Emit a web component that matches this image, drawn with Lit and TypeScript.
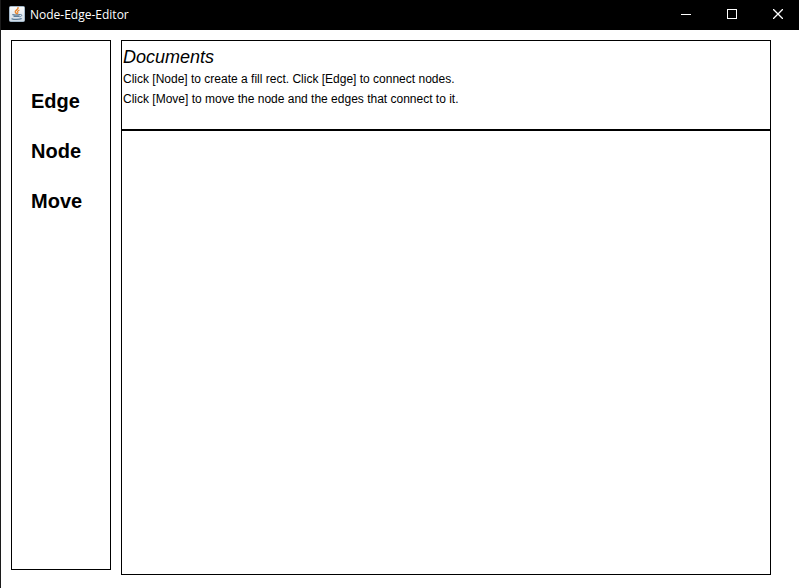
import { LitElement, html, css } from "lit";
import { customElement, state } from "lit/decorators.js";

const TOOLS = ["Edge", "Node", "Move"];

@customElement("app-title-bar")
export class AppTitleBar extends LitElement {
  static styles = css`
    :host {
      display: flex;
      align-items: center;
      height: 30px;
      background: #000;
      color: #fff;
    }
    .logo {
      flex: none;
      margin: 0 5px 2px 8px;
    }
    .title {
      flex: 1;
      margin: 0;
      font: 400 12px/28px "Noto Sans", "Open Sans", sans-serif;
      font-family: "Open Sans", "Noto Sans", sans-serif;
    }
    .controls {
      display: flex;
      gap: 4px;
      margin-bottom: 2px;
    }
    .control {
      display: grid;
      place-items: center;
      width: 42px;
      height: 28px;
      padding: 0;
      border: 0;
      background: none;
      color: inherit;
    }
    .glyph {
      display: block;
      fill: none;
      stroke: currentColor;
    }
  `;

  render() {
    return html`
      <svg class="logo" width="16" height="16" viewBox="0 0 16 16" aria-hidden="true">
        <defs>
          <linearGradient id="tile" x1="0" y1="0" x2="0" y2="1">
            <stop offset="0" stop-color="#fbfcfd" />
            <stop offset="1" stop-color="#cfdbe6" />
          </linearGradient>
        </defs>
        <rect x="0.5" y="0.5" width="15" height="15" rx="1" fill="url(#tile)" stroke="#a3b8ca" />
        <g fill="none" stroke-linecap="round">
          <path d="M9 1.6C9.8 3.4 6 4.2 6.3 5.9C6.5 6.8 7.4 7.1 7.5 7.8" stroke="#e8862d" stroke-width="1.5" />
          <path d="M10 4.2C8.6 5 8.2 5.6 8.8 6.4C9.1 6.9 8.8 7.4 8.4 7.8" stroke="#e8862d" stroke-width="1.2" />
          <path d="M3.8 8.6C5.2 9.2 9.4 9.2 10.6 8.6M5 10.5H10.2" stroke="#5f7f9b" stroke-width="1.2" />
          <path d="M11.2 8.5C13.6 8.1 13.2 10.4 11 10.8" stroke="#5f7f9b" />
          <path d="M3 12.8C5 13.6 10.4 13.6 12.2 12.6" stroke="#5f7f9b" stroke-width="1.3" />
        </g>
      </svg>
      <h1 class="title">Node-Edge-Editor</h1>
      <div class="controls">
        <button class="control" aria-label="Minimize">
          <svg class="glyph" width="10" height="10" viewBox="0 0 10 10"><path d="M0 5.5H10" /></svg>
        </button>
        <button class="control" aria-label="Maximize">
          <svg class="glyph" width="10" height="10" viewBox="0 0 10 10"><rect x="0.5" y="0.5" width="9" height="9" /></svg>
        </button>
        <button class="control" aria-label="Close">
          <svg class="glyph" width="10" height="10" viewBox="0 0 10 10"><path d="M0 0L10 10M10 0L0 10" stroke-width="1.3" /></svg>
        </button>
      </div>
    `;
  }
}

@customElement("app-root")
export class AppRoot extends LitElement {
  static styles = css`
    :host {
      display: flex;
      flex-direction: column;
      box-sizing: border-box;
      min-height: 100vh;
      border-left: 1px solid #1c1c1c;
      background: #fff;
      color: #000;
      font-family: "Liberation Sans", Arial, sans-serif;
    }
    .workspace {
      flex: 1;
      display: flex;
      gap: 10px;
      padding: 10px 28px 13px 10px;
    }
    .tools {
      box-sizing: border-box;
      flex: none;
      display: flex;
      flex-direction: column;
      width: 100px;
      margin-bottom: 5px;
      padding: 35px 0 0 19px;
      border: 1px solid #000;
    }
    .tool {
      height: 50px;
      padding: 0;
      border: 0;
      background: none;
      color: inherit;
      font: 700 20px/50px "Liberation Sans", Arial, sans-serif;
      text-align: left;
    }
    .editor {
      flex: 1;
      display: flex;
      flex-direction: column;
    }
    .documents {
      box-sizing: border-box;
      min-height: 90px;
      padding: 6px 1px;
      border: 1px solid #000;
    }
    .heading {
      margin: 0;
      padding-bottom: 2px;
      font: italic 400 18px/20px "Liberation Sans", Arial, sans-serif;
    }
    .line {
      margin: 0;
      font-size: 12px;
      line-height: 20px;
    }
    .canvas {
      flex: 1;
      border: 1px solid #000;
    }
  `;

  @state() private tool = "";

  render() {
    return html`
      <app-title-bar></app-title-bar>
      <main class="workspace">
        <nav class="tools" aria-label="Tools">
          ${TOOLS.map(
            (name) => html`
              <button
                class="tool"
                aria-pressed=${this.tool === name ? "true" : "false"}
                @click=${() => (this.tool = name)}
              >${name}</button>
            `
          )}
        </nav>
        <div class="editor">
          <section class="documents">
            <h2 class="heading">Documents</h2>
            <p class="line">Click [Node] to create a fill rect. Click [Edge] to connect nodes.</p>
            <p class="line">Click [Move] to move the node and the edges that connect to it.</p>
          </section>
          <section class="canvas" aria-label="Canvas"></section>
        </div>
      </main>
    `;
  }
}
